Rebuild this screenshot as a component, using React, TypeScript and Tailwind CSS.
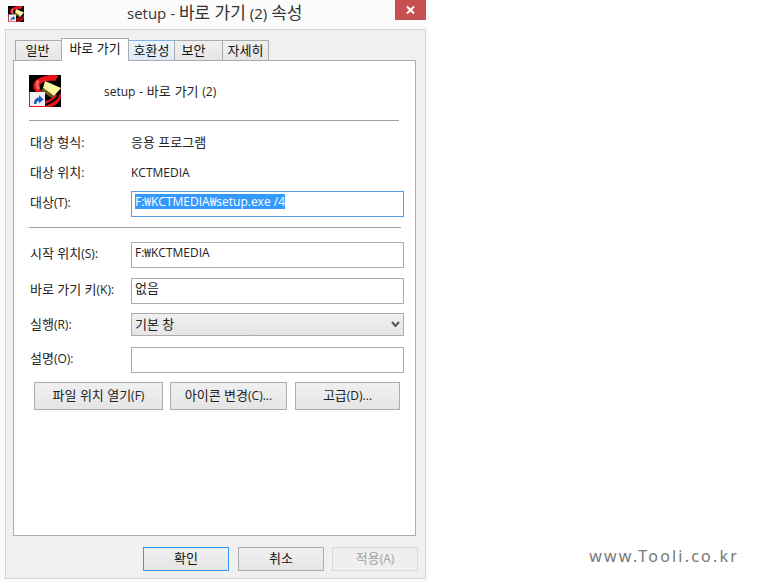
import React from "react";

const font = { fontFamily: '"Open Sans","Noto Sans CJK KR",sans-serif' };

function Mixed({ text, big = "text-[13px]" }: { text: string; big?: string }) {
  const parts = text.split(/([가-힣]+(?: [가-힣]+)*)/);
  return (
    <>
      {parts.map((p, i) =>
        /[가-힣]/.test(p) ? (
          <span key={i} className={big}>
            {p}
          </span>
        ) : (
          <span key={i}>{p}</span>
        )
      )}
    </>
  );
}

function AppIcon({ size }: { size: number }) {
  return (
    <svg width={size} height={size} viewBox="0 0 32 32" className="block shrink-0">
      <rect width="32" height="32" fill="#000" />
      <path d="M28 0 C20 -1 8 2 5 8 C3 13 6 17 11 19 L17 21 C12 17 10 14 11 10 C13 6 20 5 26 6 L29 2 Z" fill="#e8141c" />
      <path d="M8 5 C6 8 6 12 9 15 L11 13 C9 11 9 8 11 6 Z" fill="#f56a5a" />
      <path d="M31 17 C31 23 26 28 13 32 L22 32 C28 30 32 26 32 20 Z" fill="#e8141c" />
      <path d="M28 20 C27 24 22 27 16 29 L16 26 C20 25 24 23 25 20 Z" fill="#d0101a" />
      <path d="M16 6 L32 13 L25 21 L14 13 Z" fill="#fbf6a0" />
      <path d="M14 13 L25 21 L23 23 L12 16 Z" fill="#6e5f1c" />
      <rect x="1" y="17" width="15" height="15" fill="#eef1f8" />
      <rect x="0" y="17" width="1" height="15" fill="#e8141c" />
      <rect x="0" y="31" width="16" height="1" fill="#e8141c" />
      <path d="M5 29 C5 25 7 22.5 10 22.5 L10 20 L14.5 24.5 L10 28.5 L10 26 C8.5 26 7.5 27 7.5 29 Z" fill="#1d62b8" />
    </svg>
  );
}

function Tab({ label, className }: { label: string; className: string }) {
  return (
    <div className={`flex justify-center border border-b-0 text-[13px] leading-[17px] text-[#111] ${className}`}>{label}</div>
  );
}

function Field({ label, value, mt = "" }: { label: string; value?: string; mt?: string }) {
  return (
    <div className={`flex items-center ${mt}`}>
      <span className="w-[101px] pb-[2px] text-[12px] text-[#222]">
        <Mixed text={label} />
      </span>
      <div className="flex h-[26px] w-[273px] items-center border border-[#ababab] bg-white pb-[4px] pl-[3px] text-[12px] text-[#222]">
        {value ? <Mixed text={value} /> : null}
      </div>
    </div>
  );
}

function Btn({ label, className, text = "text-[#222]", border = "border-[#acacac]" }: { label: string; className: string; text?: string; border?: string }) {
  return (
    <div className={`flex items-center justify-center border bg-gradient-to-b from-[#f0f0f0] to-[#e5e5e5] pb-[1px] text-[12px] ${text} ${border} ${className}`}>
      <span>
        <Mixed text={label} />
      </span>
    </div>
  );
}

export default function App() {
  return (
    <div className="flex h-[582px] w-[758px] bg-white" style={font}>
      <div className="flex h-[582px] w-[429px] flex-col bg-[#fbfbfb]">
        <div className="flex h-[29px] w-[426px] shrink-0">
          <div className="pl-[8px] pt-[6px]">
            <AppIcon size={16} />
          </div>
          <div className="flex-1 pl-[103px] pt-[2px] text-[15px] leading-[22px] text-[#333]">
            <Mixed text="setup - 바로 가기 (2) 속성" big="text-[17px]" />
          </div>
          <div className="flex h-[20px] w-[31px] items-center justify-center bg-[#c75050]">
            <svg width="9" height="8" viewBox="0 0 9 8">
              <path d="M1 0.5 L8 7.5 M8 0.5 L1 7.5" stroke="#fff" strokeWidth="2" fill="none" />
            </svg>
          </div>
        </div>
        <div className="ml-[5px] flex h-[550px] w-[421px] flex-col border border-[#d4d4d4] bg-[#f0f0f0] pl-[7px] pt-[7px]">
          <div className="flex h-[23px] items-end pl-[2px]">
            <Tab label="일반" className="h-[20px] w-[47px] border-[#acacac] bg-gradient-to-b from-[#f0f0f0] to-[#e5e5e5] pr-[2px] pt-[1px]" />
            <Tab label="바로 가기" className="z-10 -mb-px -ml-px h-[23px] w-[68px] border-[#acacac] bg-white pt-[1px]" />
            <Tab label="호환성" className="-ml-px h-[20px] w-[47px] border-[#7eb4ea] bg-gradient-to-b from-[#ecf4fc] to-[#dcecfc] pt-[1px]" />
            <Tab label="보안" className="-ml-px h-[20px] w-[49px] border-[#acacac] bg-gradient-to-b from-[#f0f0f0] to-[#e5e5e5] pr-[10px] pt-[1px]" />
            <Tab label="자세히" className="-ml-px h-[20px] w-[47px] border-[#acacac] bg-gradient-to-b from-[#f0f0f0] to-[#e5e5e5] pt-[1px]" />
          </div>
          <div className="flex h-[476px] w-[403px] flex-col border border-[#acacac] bg-white pl-[15px]">
            <div className="mt-[14px] flex h-[32px] items-center">
              <AppIcon size={32} />
              <span className="ml-[43px] pt-[2px] text-[12px] text-[#222] [word-spacing:0.6px]">
                <Mixed text="setup - 바로 가기 (2)" />
              </span>
            </div>
            <div className="mt-[13px] h-px w-[370px] bg-[#a0a0a0]" />
            <div className="mt-[13px] flex h-[18px] items-center text-[12px] text-[#222]">
              <span className="w-[102px] pl-px">
                <Mixed text="대상 형식:" />
              </span>
              <span>
                <Mixed text="응용 프로그램" />
              </span>
            </div>
            <div className="mt-[12px] flex h-[18px] items-center text-[12px] text-[#222]">
              <span className="w-[102px] pl-px">
                <Mixed text="대상 위치:" />
              </span>
              <span>KCTMEDIA</span>
            </div>
            <div className="mt-[9px] flex items-center pl-px">
              <span className="w-[101px] pb-[2px] text-[12px] text-[#222]">
                <Mixed text="대상(T):" />
              </span>
              <div className="flex h-[26px] w-[273px] items-start border border-[#569de5] bg-white pl-[3px] pt-[2px] text-[12px]">
                <span className="bg-[#3399ff] leading-[15px] text-white">F:₩KCTMEDIA₩setup.exe /4</span>
              </div>
            </div>
            <div className="mt-[10px] h-px w-[372px] bg-[#a0a0a0]" />
            <div className="pl-px">
              <Field label="시작 위치(S):" value="F:₩KCTMEDIA" mt="mt-[14px]" />
              <Field label="바로 가기 키(K):" value="없음" mt="mt-[10px]" />
              <div className="mt-[9px] flex items-center">
                <span className="w-[101px] text-[12px] text-[#222]">
                  <Mixed text="실행(R):" />
                </span>
                <div className="flex h-[23px] w-[273px] items-center justify-between border border-[#acacac] bg-gradient-to-b from-[#f0f0f0] to-[#e5e5e5] pl-[3px] pr-[3px] text-[13px] text-[#222]">
                  <span>기본 창</span>
                  <svg width="9" height="7" viewBox="0 0 9 7">
                    <path d="M1 1 L4.5 5 L8 1" stroke="#555" strokeWidth="2" fill="none" />
                  </svg>
                </div>
              </div>
              <Field label="설명(O):" mt="mt-[11px]" />
            </div>
            <div className="ml-[5px] mt-[9px] flex">
              <Btn label="파일 위치 열기(F)" className="h-[28px] w-[129px]" />
              <Btn label="아이콘 변경(C)..." className="ml-[7px] h-[28px] w-[117px]" />
              <Btn label="고급(D)..." className="ml-[8px] h-[28px] w-[105px]" />
            </div>
          </div>
          <div className="ml-[130px] mt-[11px] flex">
            <Btn label="확인" className="h-[24px] w-[86px]" border="border-[#3399ff]" text="text-[#111]" />
            <Btn label="취소" className="ml-[9px] h-[24px] w-[86px]" text="text-[#111]" />
            <Btn label="적용(A)" className="ml-[8px] h-[24px] w-[86px] !bg-none bg-[#efefef]" border="border-[#d9d9d9]" text="text-[#a0a0a0]" />
          </div>
        </div>
      </div>
      <div className="flex flex-1 items-end justify-end pb-[16px] pr-[19px]">
        <span className="text-[16px] leading-[20px] tracking-[2.2px] text-[#777]" style={{ fontFamily: '"Noto Sans",sans-serif' }}>
          www.Tooli.co.kr
        </span>
      </div>
    </div>
  );
}
